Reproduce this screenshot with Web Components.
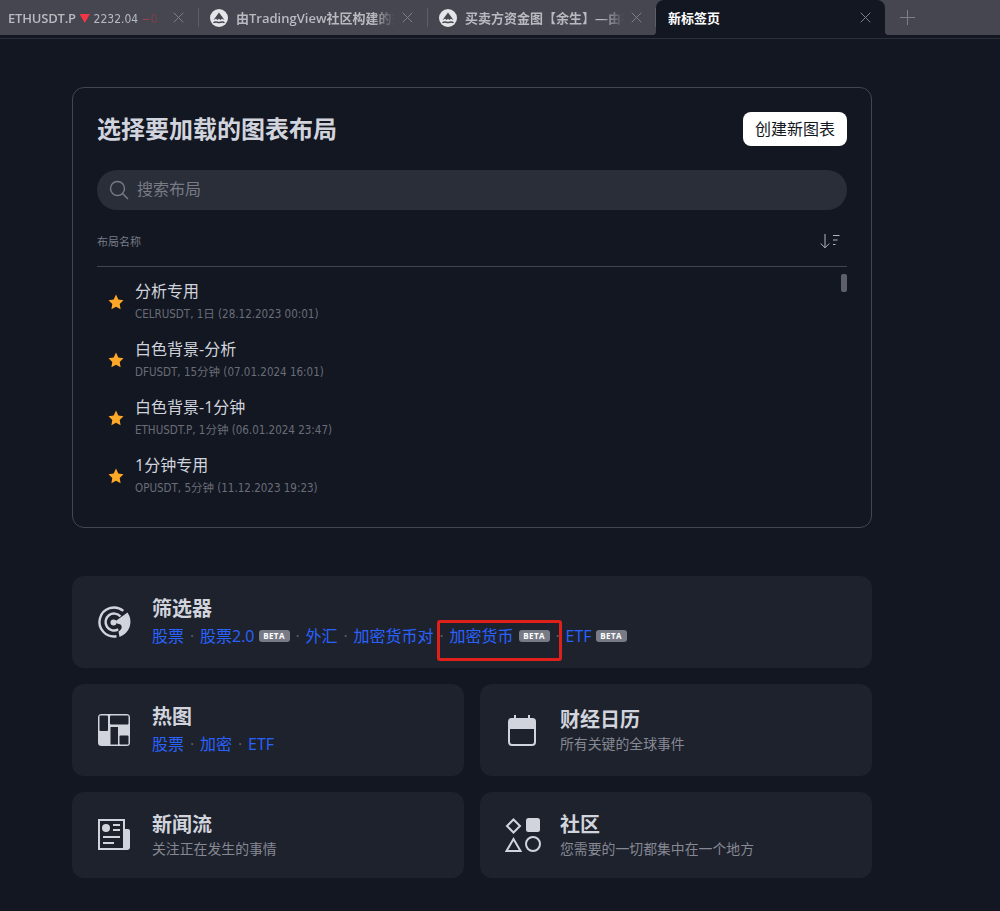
<!DOCTYPE html>
<html lang="zh"><head><meta charset="utf-8"><title>新标签页</title>
<style>
html,body{margin:0;padding:0;background:#131722;height:911px;overflow:hidden}
body{font-family:"Open Sans","Noto Sans CJK SC",sans-serif;color:#d1d4dc}
</style></head><body>
<tv-tabbar>
<tv-tab w="199" pad="8" xm="15"><span style="letter-spacing:-.2px">ETHUSDT.P</span> <span style="color:#f23645;font-size:11px">▼</span> <span style="font-family:'DejaVu Sans Condensed','Open Sans',sans-serif;font-weight:400;font-size:12px">2232.04 <span style="color:#a8404c">−0.</span></span></tv-tab>
<tv-tab w="229" logo xm="15">由TradingView社区构建的交易</tv-tab>
<tv-tab w="228" logo>买卖方资金图【余生】—由社区</tv-tab>
<tv-tab w="229" active pad="12">新标签页</tv-tab>
<tv-plus></tv-plus>
</tv-tabbar>
<tv-main>
<tv-layouts>
<tv-layout-row name="分析专用" meta="CELRUSDT, 1日 (28.12.2023 00:01)"></tv-layout-row>
<tv-layout-row name="白色背景-分析" meta="DFUSDT, 15分钟 (07.01.2024 16:01)"></tv-layout-row>
<tv-layout-row name="白色背景-1分钟" meta="ETHUSDT.P, 1分钟 (06.01.2024 23:47)"></tv-layout-row>
<tv-layout-row name="1分钟专用" meta="OPUSDT, 5分钟 (11.12.2023 19:23)"></tv-layout-row>
</tv-layouts>
<tv-grid>
<tv-card title="筛选器" h="92" kind="links" style="grid-column:1 / 3">
<svg slot="icon" width="32" height="32" viewBox="0 0 32 32" style="overflow:visible"><g fill="none" stroke="#d1d4dc" stroke-width="2.400"><path d="M25.300 4.900A14.500 14.500 0 1 0 18.500 30.300"/><path d="M22.500 10.500A8.500 8.500 0 1 0 20.300 23.400"/></g><path d="M17 15.500 29.500 6.500A16 16 0 0 1 21.500 31L20.500 25.500C25 23 25 18 19 17.500Z" fill="#d1d4dc" stroke="#1e222d" stroke-width="1.500" paint-order="stroke"/><circle cx="15.500" cy="16.500" r="3" fill="#d1d4dc"/></svg>
<tv-links><a>股票</a><i>·</i><a>股票2.0</a><tv-beta></tv-beta><i>·</i><a>外汇</a><i>·</i><a>加密货币对</a><i>·</i><a>加密货币</a><tv-beta style="margin-left:5px"></tv-beta><i>·</i><a>ETF</a><tv-beta></tv-beta></tv-links>
</tv-card>
<tv-card title="热图" h="92" kind="links">
<svg slot="icon" width="32" height="32" viewBox="0 0 32 32"><rect width="32" height="32" rx="3.500" fill="#d1d4dc"/><rect x="1.500" y="1.500" width="8.500" height="15.500" rx="1" fill="#1e222d"/><rect x="12" y="1.500" width="18.500" height="9" rx="1" fill="#1e222d"/><rect x="12.500" y="13" width="7.500" height="17.500" fill="#1e222d"/><rect x="21.500" y="21.500" width="9" height="9" rx="1" fill="#1e222d"/></svg>
<tv-links><a>股票</a><i>·</i><a>加密</a><i>·</i><a>ETF</a></tv-links>
</tv-card>
<tv-card title="财经日历" h="92" kind="desc">
<svg slot="icon" width="28" height="31" viewBox="0 0 28 31" style="margin-left:2px"><path d="M7 0v4M21 0v4" stroke="#d1d4dc" stroke-width="2"/><path d="M3.500 3h21A3.500 3.500 0 0 1 28 6.500V14H0V6.500A3.500 3.500 0 0 1 3.500 3z" fill="#d1d4dc"/><path d="M1 13v14a3 3 0 0 0 3 3h20a3 3 0 0 0 3-3V13" fill="none" stroke="#d1d4dc" stroke-width="2"/></svg>
<span class="d">所有关键的全球事件</span>
</tv-card>
<tv-card title="新闻流" h="86" kind="desc">
<svg slot="icon" width="32" height="32" viewBox="0 0 32 32"><path d="M1 1h25v29H1z" fill="none" stroke="#d1d4dc" stroke-width="2"/><path d="M27 10h3a2 2 0 0 1 2 2v16a3 3 0 0 1-3 3h-3z" fill="#d1d4dc"/><circle cx="8" cy="9" r="4" fill="#d1d4dc"/><path d="M15 6h7M15 11h7M5 18h17M5 24h11" stroke="#d1d4dc" stroke-width="2"/></svg>
<span class="d">关注正在发生的事情</span>
</tv-card>
<tv-card title="社区" h="86" kind="desc">
<svg slot="icon" width="36" height="36" viewBox="0 0 36 36" style="margin-left:-1px"><path d="M8.500 2.500 15 9l-6.500 6.500L2 9z" fill="none" stroke="#d1d4dc" stroke-width="2"/><rect x="21" y="1" width="14" height="14" rx="2.500" fill="#d1d4dc"/><path d="M8.500 22 15.500 34H1.500z" fill="none" stroke="#d1d4dc" stroke-width="2"/><circle cx="28" cy="27" r="7" fill="none" stroke="#d1d4dc" stroke-width="2"/></svg>
<span class="d">您需要的一切都集中在一个地方</span>
</tv-card>
</tv-grid>
<tv-highlight></tv-highlight>
</tv-main>
<script>
const def=(n,css,html,init)=>customElements.define(n,class extends HTMLElement{
  connectedCallback(){ if(this.shadowRoot) return; const s=this.attachShadow({mode:'open'});
    s.innerHTML='<style>'+css+'</style>'+(typeof html==='function'?html(this):html); init&&init(this,s);}
});
const X='<svg width="11" height="11" viewBox="0 0 11 11"><path d="M.7.7l9.600 9.600M10.300.7L.7 10.300" stroke="currentColor" stroke-width="1"/></svg>';
const LOGO='<svg width="18" height="18" viewBox="0 0 18 18" style="flex:none"><circle cx="9" cy="9" r="9" fill="#e4e5e8"/><path d="M3.500 11 9 3.500 14.500 11 12 9.800 10.500 11 9 9.800 7.500 11 6 9.800z" fill="#45464f"/><path d="M3.500 13.800c2-1.600 3.500-.3 5.500-.3s3.500-1.300 5.500.3" stroke="#45464f" stroke-width="1.400" fill="none"/></svg>';

def('tv-tabbar',`:host{display:flex;height:35px;background:#45464f;border-bottom:3px solid #131722;position:relative}
 :host::after{content:"";position:absolute;left:0;right:0;top:38px;height:1px;background:#2a2e39}`,'<slot></slot>');

def('tv-tab',`:host{display:flex;align-items:center;box-sizing:border-box;height:35px;position:relative;flex:none;color:#b9bac0;font-size:13px;font-weight:600;white-space:nowrap}
 .t{flex:1;min-width:0;overflow:hidden;-webkit-mask-image:linear-gradient(90deg,#000 86%,transparent);mask-image:linear-gradient(90deg,#000 86%,transparent)}
 .x{flex:none;display:flex;color:#7d7e86;margin-left:7px}
 .sep{position:absolute;right:0;top:8px;height:19px;width:1px;background:#5c5d65}
 :host([active]){background:#131722;color:#fff;border-radius:8px 8px 0 0}
 :host([active]) .t{-webkit-mask-image:none;mask-image:none}
 .c{position:absolute;bottom:0;width:4px;height:4px}
 .c.l{left:-4px;background:radial-gradient(circle at 0 0,transparent 4px,#131722 4.500px)}
 .c.r{right:-4px;background:radial-gradient(circle at 100% 0,transparent 4px,#131722 4.500px)}
 `,e=>{const pad=e.getAttribute('pad')||'8';const logo=e.hasAttribute('logo');const act=e.hasAttribute('active');const xm=e.getAttribute('xm')||'14';return `<span style="width:${logo?11:0}px;flex:none"></span>${logo?LOGO:''}<div class="t" style="margin-left:${pad}px"><slot></slot></div><span class="x" style="margin-right:${xm}px">${X}</span>${act?'<span class="c l"></span><span class="c r"></span>':'<span class="sep"></span>'}`},
 e=>{e.style.width=e.getAttribute('w')+'px'});

def('tv-plus',`:host{display:flex;width:44px;height:35px;align-items:center;justify-content:center;color:#7d7e86}`,
 '<svg width="15" height="15" viewBox="0 0 15 15"><path d="M7.500 0v15M0 7.500h15" stroke="currentColor" stroke-width="1"/></svg>');

def('tv-main',`:host{display:block;width:800px;margin-left:72px;padding-top:49px;position:relative}`,'<slot></slot>');

def('tv-layouts',`:host{display:block;box-sizing:border-box;height:441px;border:1px solid #434651;border-radius:12px;padding:24px 24px 0;position:relative}
 header{display:flex;justify-content:space-between;align-items:center;height:34px}
 h1{margin:0;font-size:24px;font-weight:700;color:#d1d4dc;line-height:34px}
 button{all:unset;background:#fff;color:#131722;width:104px;height:34px;border-radius:8px;text-align:center;font-size:16px;line-height:33px}
 .search{display:flex;align-items:center;height:40px;margin-top:24px;border-radius:20px;background:#2a2e39;color:#787b86;font-size:16px;line-height:38px;padding-left:12px;gap:8px}
 .search span{position:relative;top:-1px}
 .head{display:flex;justify-content:space-between;align-items:center;height:56px;border-bottom:1px solid #434651;color:#787b86;font-size:11px}
 .head span{margin-top:6px}
 .head svg{margin-right:7px;margin-top:5px}
 .list{padding-top:4px;position:relative}
 .bar{position:absolute;right:0;top:7px;width:6px;height:18px;border-radius:2px;background:#5d606b}`,
 `<header><h1>选择要加载的图表布局</h1><button>创建新图表</button></header>
 <div class="search"><svg width="20" height="20" viewBox="0 0 20 20" fill="none" stroke="#787b86" stroke-width="1.400"><circle cx="8.500" cy="8.500" r="7"/><path d="M13.500 13.500l5.500 5.500"/></svg><span>搜索布局</span></div>
 <div class="head"><span>布局名称</span><svg width="20" height="16" viewBox="0 0 20 16" fill="none" stroke="#b2b5be" stroke-width="1"><path d="M5 1v13.500M.7 10.500 5 14.800l4.300-4.300M13 2.500h6.500M13 7h4.500M13 11.500h2.500"/></svg></div>
 <div class="list"><span class="bar"></span><slot></slot></div>`);

def('tv-layout-row',`:host{display:flex;align-items:center;height:58px;padding-left:11px;gap:11px;box-sizing:border-box}
 svg{flex:none;margin-top:4px}
 .n{font-size:16px;color:#d1d4dc;line-height:22px}
 .m{font-family:"DejaVu Sans Condensed","Open Sans","Noto Sans CJK SC",sans-serif;font-size:11.500px;color:#6a6d78;line-height:16px;margin-top:3px;position:relative;top:1px}`,
 e=>`<svg width="16" height="16" viewBox="0 0 16 16"><path d="M8 .6l2.300 4.900 5.200.7-3.800 3.700.9 5.300L8 12.800l-4.600 2.400.9-5.300L.5 6.200l5.200-.7z" fill="#ffa726"/></svg><div><div class="n">${e.getAttribute('name')}</div><div class="m">${e.getAttribute('meta')}</div></div>`);

def('tv-grid',`:host{display:grid;grid-template-columns:392px 392px;column-gap:16px;row-gap:16px;margin-top:48px}`,'<slot></slot>');

def('tv-card',`:host{display:flex;align-items:center;box-sizing:border-box;background:#1e222d;border-radius:12px;padding-left:26px}
 .ic{width:54px;flex:none;display:flex}
 h2{margin:0;font-size:20px;font-weight:700;line-height:24px;color:#d1d4dc}
 .b{margin-top:4px;line-height:22px;color:#787b86}
 :host([kind=links]) .tx{margin-bottom:1px}
 :host([kind=desc]) .b{margin-top:0}
 :host([kind=desc]) .tx{margin-top:3px}
 ::slotted(.d){font-size:13.870px;color:#868993}`,
 e=>`<div class="ic"><slot name="icon"></slot></div><div class="tx"><h2>${e.getAttribute('title')}</h2><div class="b"><slot></slot></div></div>`,
 e=>{e.style.height=e.getAttribute('h')+'px'; e.removeAttribute('title')});

def('tv-links',`:host{display:flex;align-items:center;white-space:nowrap;color:#2962ff;font-size:16px}
 ::slotted(a){color:#2962ff;text-decoration:none}
 ::slotted(i){color:#5d606b;font-style:normal;width:16px;text-align:center}`,'<slot></slot>');

def('tv-beta',`:host{display:inline-flex;align-items:center;justify-content:center;box-sizing:border-box;width:31px;height:12px;margin-left:4px;background:#787b86;border-radius:3px;color:#fff;font-size:8px;font-weight:700;letter-spacing:.4px}`,'BETA');

def('tv-highlight',`:host{position:absolute;left:365px;top:582px;width:125px;height:41px;box-sizing:border-box;border:3px solid #e0211b;border-radius:3px;pointer-events:none}`,'');
</script>
</body></html>
